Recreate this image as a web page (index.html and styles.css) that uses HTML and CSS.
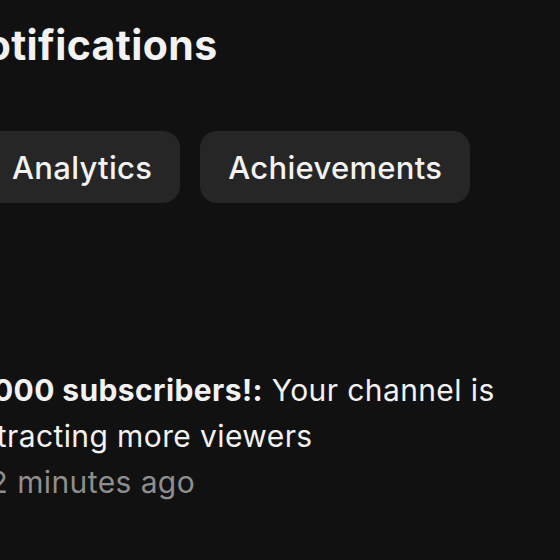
FILE: index.html
```html
<!DOCTYPE html>
<html lang="en">
<head>
<meta charset="utf-8">
<title>Notifications</title>
<link rel="stylesheet" href="styles.css">
</head>
<body>
<main class="screen">
  <h1 class="title">Notifications</h1>
  <nav class="chips">
    <button class="chip">Analytics</button>
    <button class="chip">Achievements</button>
  </nav>
  <section class="notice">
    <p class="notice-text"><strong>1,000 subscribers!:</strong> Your channel is attracting more viewers</p>
    <p class="notice-time">12 minutes ago</p>
  </section>
</main>
</body>
</html>
```
FILE: styles.css
```css
html, body {
  margin: 0;
  padding: 0;
  background: #111111;
  width: 560px;
  height: 560px;
  overflow: hidden;
}
body {
  font-family: Inter, "Noto Sans", "Liberation Sans", sans-serif;
  color: #f2f2f2;
}
.screen {
  display: flex;
  flex-direction: column;
  padding-top: 18px;
}
.title {
  margin: 0 0 0 -46px;
  font-size: 41px;
  font-weight: 700;
  line-height: 54px;
  letter-spacing: 0.4px;
  white-space: nowrap;
}
.chips {
  display: flex;
  gap: 20px;
  margin: 59px 0 0 -16px;
}
.chip {
  font: inherit;
  font-size: 31px;
  font-weight: 500;
  letter-spacing: 0.3px;
  color: #f2f2f2;
  background: #262626;
  border: none;
  border-radius: 17px;
  height: 72px;
  padding: 0 28px;
  white-space: nowrap;
}
.notice {
  margin: 164px 0 0 -30px;
  width: 590px;
}
.notice-text {
  margin: 0;
  font-size: 30px;
  letter-spacing: 0.4px;
  line-height: 46px;
}
.notice-text strong {
  font-weight: 700;
}
.notice-time {
  margin: 0;
  padding-left: 7px;
  font-size: 30px;
  letter-spacing: 0.4px;
  line-height: 46px;
  color: #8e8e8e;
}
```
